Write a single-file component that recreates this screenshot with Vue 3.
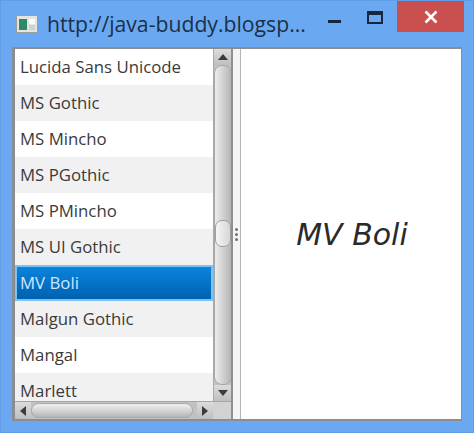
<template>
  <div class="window">
    <header class="titlebar">
      <svg class="app-icon" width="22" height="18" viewBox="0 0 22 18">
        <rect x="0.5" y="0.5" width="21" height="17" fill="#e4e4e0" stroke="#9a9d9e" />
        <rect x="3" y="4" width="8" height="11" fill="#2f8a6c" />
        <rect x="13" y="4" width="6" height="5" fill="#fafafa" />
        <rect x="13" y="10" width="6" height="5" fill="#c9d4d4" />
      </svg>
      <span class="title">http://java-buddy.blogsp...</span>
      <div class="controls">
        <button class="ctl min"><i></i></button>
        <button class="ctl max"><i></i></button>
        <button class="ctl close">
          <svg width="14" height="14" viewBox="0 0 14 14">
            <path d="M1.5 1.5 12.5 12.5M12.5 1.5 1.5 12.5" stroke="#fff" stroke-width="2.6" />
          </svg>
        </button>
      </div>
    </header>

    <main class="content">
      <section class="list-pane">
        <div class="list-row">
          <ul class="font-list">
            <li
              v-for="(font, index) in fonts"
              :key="font"
              class="font-item"
              :class="{ odd: index % 2 === 1, selected: font === selected }"
            >
              {{ font }}
            </li>
          </ul>
          <div class="vscroll">
            <div class="arrow-btn"><span class="tri up"></span></div>
            <div class="vthumb"><span class="vgrip"></span></div>
            <div class="arrow-btn"><span class="tri down"></span></div>
          </div>
        </div>
        <div class="hscroll">
          <div class="arrow-btn h"><span class="tri left"></span></div>
          <div class="hthumb"></div>
          <div class="arrow-btn h"><span class="tri right"></span></div>
          <div class="corner"></div>
        </div>
      </section>

      <div class="divider">
        <span></span><span></span><span></span>
      </div>

      <section class="preview">
        <p class="preview-text">{{ selected }}</p>
      </section>
    </main>
  </div>
</template>

<script setup>
import { ref } from "vue"

const selected = ref("MV Boli")

const fonts = [
  "Lucida Sans Unicode",
  "MS Gothic",
  "MS Mincho",
  "MS PGothic",
  "MS PMincho",
  "MS UI Gothic",
  "MV Boli",
  "Malgun Gothic",
  "Mangal",
  "Marlett",
]
</script>

<style>
html,
body {
  margin: 0;
  background: #6aa9f2;
}
</style>

<style scoped>
.window {
  width: 474px;
  height: 433px;
  box-sizing: border-box;
  background: #6aa9f2;
  border: 1px solid #5f9de6;
  padding: 0 11px 11px;
  display: flex;
  flex-direction: column;
  font-family: "Open Sans", "Noto Sans", sans-serif;
  overflow: hidden;
}

.titlebar {
  height: 46px;
  flex: none;
  display: flex;
  align-items: flex-start;
}

.app-icon {
  margin: 14px 0 0 4px;
  flex: none;
}

.title {
  margin: 8px 0 0 9px;
  font-size: 21.2px;
  line-height: 30px;
  color: #1b3048;
  white-space: nowrap;
}

.controls {
  margin-left: auto;
  margin-right: -2px;
  display: flex;
  align-items: flex-start;
}

.ctl {
  border: 0;
  padding: 0;
  background: none;
  display: flex;
  align-items: center;
  justify-content: center;
}

.min {
  width: 46px;
  height: 31px;
  margin-right: 3px;
}

.min i {
  width: 13px;
  height: 3px;
  margin-top: 10px;
  background: #16283f;
}

.max {
  width: 30px;
  height: 31px;
  margin-right: 7px;
}

.max i {
  width: 12px;
  height: 7px;
  margin-top: 1px;
  border: 2px solid #16283f;
  border-top-width: 4px;
}

.close {
  width: 67px;
  height: 31px;
  background: #c9504f;
}

.content {
  flex: 1;
  min-height: 0;
  display: flex;
  background: #f4f4f4;
  border-top: 2px solid #8b8d90;
  border-left: 3px solid #8b8d90;
  border-right: 1px solid #8b8d90;
  border-bottom: 2px solid #8b8d90;
}

.list-pane {
  width: 216px;
  flex: none;
  display: flex;
  flex-direction: column;
  background: #bdbdbd;
}

.list-row {
  flex: 1;
  min-height: 0;
  display: flex;
}

.font-list {
  list-style: none;
  margin: 0;
  padding: 0;
  width: 198px;
  flex: none;
  overflow: hidden;
  background: #fff;
}

.font-item {
  height: 36px;
  box-sizing: border-box;
  padding-left: 5px;
  font-size: 16.8px;
  line-height: 36px;
  color: #3a3a3a;
  white-space: nowrap;
}

.font-item.odd {
  background: #f1f1f1;
}

.font-item.selected {
  color: #cfe6ff;
  background: linear-gradient(#0a84dc, #0061b0);
  border: 2px solid #7cc2f2;
  padding-left: 3px;
  line-height: 32px;
}

.vscroll {
  flex: 1;
  display: flex;
  flex-direction: column;
  background: #c2c2c2;
  border-left: 1px solid #a9a9a9;
  border-right: 1px solid #a9a9a9;
}

.arrow-btn {
  height: 16px;
  flex: none;
  display: flex;
  align-items: center;
  justify-content: center;
  background: linear-gradient(#dcdcdc, #bfbfbf);
}

.arrow-btn.h {
  width: 16px;
  height: auto;
}

.tri {
  width: 0;
  height: 0;
  border: 5px solid transparent;
}

.tri.up {
  border-top: 0;
  border-bottom: 6px solid #3c3c3c;
}

.tri.down {
  border-bottom: 0;
  border-top: 6px solid #3c3c3c;
}

.tri.left {
  border-left: 0;
  border-right: 6px solid #3c3c3c;
}

.tri.right {
  border-right: 0;
  border-left: 6px solid #3c3c3c;
}

.vthumb {
  flex: 1;
  border: 1px solid #a8a8a8;
  border-radius: 8px;
  background: linear-gradient(90deg, #ececec, #cfcfcf 55%, #b5b5b5);
  display: flex;
  align-items: center;
  justify-content: center;
}

.vgrip {
  width: 14px;
  height: 25px;
  margin-top: 16px;
  border: 1px solid #9f9f9f;
  border-radius: 7px;
  background: linear-gradient(90deg, #f6f6f6, #d6d6d6);
}

.hscroll {
  height: 18px;
  flex: none;
  display: flex;
  border-top: 1px solid #a6a6a6;
  box-sizing: border-box;
  background: #c2c2c2;
}

.hthumb {
  flex: 1;
  margin: 1px 4px 1px 0;
  border: 1px solid #a8a8a8;
  border-radius: 8px;
  background: linear-gradient(#efefef, #d2d2d2 55%, #b5b5b5);
}

.corner {
  width: 18px;
  flex: none;
  background: #d2d2d2;
}

.divider {
  width: 10px;
  flex: none;
  box-sizing: border-box;
  border-left: 2px solid #8f8f8f;
  border-right: 1px solid #b5b5b5;
  display: flex;
  flex-direction: column;
  align-items: center;
  justify-content: center;
  gap: 2px;
  background: #f4f4f4;
}

.divider span {
  width: 3px;
  height: 3px;
  border-radius: 50%;
  background: #707070;
}

.preview {
  flex: 1;
  background: #fff;
  display: flex;
  align-items: center;
  justify-content: center;
}

.preview-text {
  margin: 0 0 0 2px;
  font-family: "DejaVu Sans", sans-serif;
  font-style: italic;
  font-size: 30px;
  color: #2a2a2a;
}
</style>
